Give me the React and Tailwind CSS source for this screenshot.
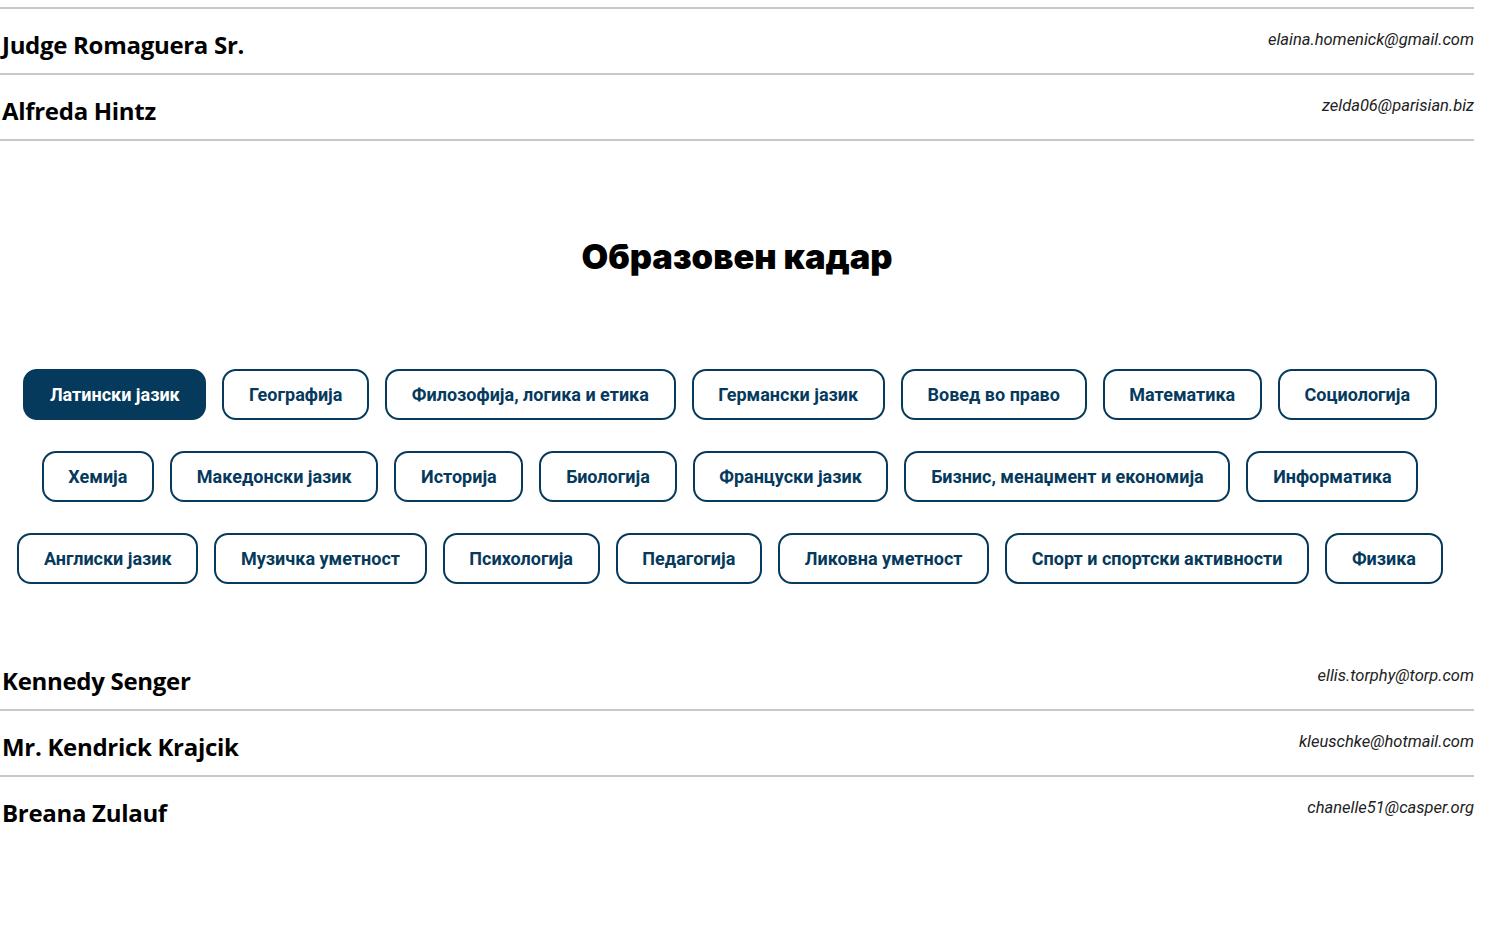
import React from 'react';

const topPeople = [
  { name: 'Judge Romaguera Sr.', email: 'elaina.homenick@gmail.com' },
  { name: 'Alfreda Hintz', email: 'zelda06@parisian.biz' },
];

const bottomPeople = [
  { name: 'Kennedy Senger', email: 'ellis.torphy@torp.com' },
  { name: 'Mr. Kendrick Krajcik', email: 'kleuschke@hotmail.com' },
  { name: 'Breana Zulauf', email: 'chanelle51@casper.org' },
];

const subjectRows = [
  ['Латински јазик', 'Географија', 'Филозофија, логика и етика', 'Германски јазик', 'Вовед во право', 'Математика', 'Социологија'],
  ['Хемија', 'Македонски јазик', 'Историја', 'Биологија', 'Француски јазик', 'Бизнис, менаџмент и економија', 'Информатика'],
  ['Англиски јазик', 'Музичка уметност', 'Психологија', 'Педагогија', 'Ликовна уметност', 'Спорт и спортски активности', 'Физика'],
];

const PersonRow = ({ person, last }) => (
  <div className={`flex justify-between items-start pt-[21px] pb-[13px] ${last ? '' : 'border-b-2 border-[#c8c8c8]'}`}>
    <h3 className="pl-[2px] font-['Open_Sans',sans-serif] font-bold text-[24px] leading-[30px] text-black tracking-[-0.3px]">
      {person.name}
    </h3>
    <span className="font-['Roboto',sans-serif] italic text-[16.5px] leading-[20px] text-[#222]">
      {person.email}
    </span>
  </div>
);

export default function App() {
  const active = 'Латински јазик';

  return (
    <div className="w-[1474px] bg-white">
      {/* tail of the row above */}
      <div className="h-[9px] border-b-2 border-[#c8c8c8]" />
      {topPeople.map((p) => (
        <PersonRow key={p.email} person={p} />
      ))}

      {/* Staff section */}
      <section className="pt-[94px] pb-[61px]">
        <h2 className="text-center font-['Inter',sans-serif] font-black text-[34.5px] leading-[44px] text-black">
          Образовен кадар
        </h2>
        <div className="mt-[90px] flex flex-col gap-y-[31px]">
          {subjectRows.map((row, i) => (
            <div key={i} className="flex justify-center pl-[2px]">
              {row.map((s) => (
                <button
                  key={s}
                  className={`mr-4 px-[24.7px] py-[13px] rounded-[14px] border-2 border-[#063a5c] font-['Roboto',sans-serif] font-bold text-[18px] leading-[21px] ${
                    s === active ? 'bg-[#063a5c] text-white' : 'bg-white text-[#063a5c]'
                  }`}
                >
                  {s}
                </button>
              ))}
            </div>
          ))}
        </div>
      </section>

      {bottomPeople.map((p, i) => (
        <PersonRow key={p.email} person={p} last={i === bottomPeople.length - 1} />
      ))}
    </div>
  );
}
